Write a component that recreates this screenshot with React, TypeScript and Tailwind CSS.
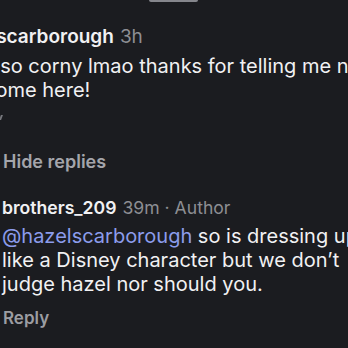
import React from 'react';

const App: React.FC = () => {
  return (
    <div className="w-[348px] h-[348px] overflow-hidden bg-[#1b1c20] text-[#f1f1f3] font-['Inter','Liberation_Sans',sans-serif]">
      {/* top pill edge */}
      <div className="ml-[149px] w-[49px] h-[2px] bg-[#85868c] rounded-b-sm" />

      {/* first reply */}
      <div className="mt-[23px] -ml-[53px] h-[24px] text-[19px] leading-[24px] whitespace-nowrap">
        <span className="font-semibold">hazelscarborough</span>
        <span className="ml-[6px] text-[#8d8e93]">3h</span>
      </div>
      <div className="mt-[5px] -ml-[16px] text-[20px] leading-[24px] whitespace-nowrap">
        <div>s so corny lmao thanks for telling me not to</div>
        <div>come here!</div>
      </div>
      <div className="mt-[13px] w-[2px] h-[5px] bg-[#77787d] skew-x-[-20deg]" />

      {/* hide replies */}
      <div className="mt-[30px] pl-[3px] h-[24px] text-[18px] leading-[24px] font-semibold text-[#a4a5ab]">
        Hide replies
      </div>

      {/* author reply */}
      <div className="mt-[22px] pl-[2px] h-[24px] text-[17.6px] leading-[24px] whitespace-nowrap">
        <span className="font-semibold">brothers_209</span>
        <span className="ml-[6px] text-[#8d8e93]">39m · Author</span>
      </div>
      <div className="mt-[4px] pl-[2px] text-[20px] leading-[24px] whitespace-nowrap">
        <div>
          <span className="text-[#8c9cec]">@hazelscarborough</span> so is dressing up
        </div>
        <div>like a Disney character but we don’t</div>
        <div>judge hazel nor should you.</div>
      </div>
      <div className="mt-[10px] pl-[3px] h-[24px] text-[17px] leading-[24px] font-semibold text-[#9c9da2]">
        Reply
      </div>
    </div>
  );
};

export default App;
